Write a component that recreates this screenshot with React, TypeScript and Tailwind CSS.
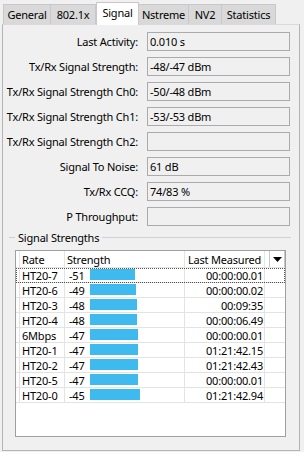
import React from "react";

const fields: [string, string][] = [
  ["Last Activity:", "0.010 s"],
  ["Tx/Rx Signal Strength:", "-48/-47 dBm"],
  ["Tx/Rx Signal Strength Ch0:", "-50/-48 dBm"],
  ["Tx/Rx Signal Strength Ch1:", "-53/-53 dBm"],
  ["Tx/Rx Signal Strength Ch2:", ""],
  ["Signal To Noise:", "61 dB"],
  ["Tx/Rx CCQ:", "74/83 %"],
  ["P Throughput:", ""],
];

const rows: [string, string, number, string][] = [
  ["HT20-7", "-51", 45, "00:00:00.01"],
  ["HT20-6", "-49", 46, "00:00:00.02"],
  ["HT20-3", "-48", 47, "00:09:35"],
  ["HT20-4", "-48", 47, "00:00:06.49"],
  ["6Mbps", "-47", 48, "00:00:00.01"],
  ["HT20-1", "-47", 48, "01:21:42.15"],
  ["HT20-2", "-47", 48, "01:21:42.43"],
  ["HT20-5", "-47", 48, "00:00:00.01"],
  ["HT20-0", "-45", 50, "01:21:42.94"],
];

const tabs: [string, number][] = [
  ["General", 48],
  ["802.1x", 45],
  ["Signal", 43],
  ["Nstreme", 50],
  ["NV2", 33],
  ["Statistics", 54],
];

export default function App() {
  return (
    <div
      className="w-[304px] h-[452px] bg-[#f0f0f0] text-black text-[11px] tracking-[-0.2px] leading-none overflow-hidden"
      style={{ fontFamily: '"Noto Sans", "DejaVu Sans", sans-serif' }}
    >
      {/* tabs */}
      <div className="flex items-end h-[24px] pl-[3px]">
        {tabs.map(([t, w], i) =>
          t === "Signal" ? (
            <div
              key={t}
              className="relative z-10 h-[23px] -mb-px bg-white border border-b-0 border-[#c8c8c8] flex items-center justify-center pb-[3px]"
              style={{ width: w }}
            >
              {t}
            </div>
          ) : (
            <div
              key={t}
              className={`h-[20px] bg-[#d9d9d9] border-t border-r border-[#c8c8c8] flex items-center justify-center ${
                i === 0 ? "border-l" : ""
              }`}
              style={{ width: w }}
            >
              {t}
            </div>
          )
        )}
      </div>

      {/* panel */}
      <div className="ml-[2px] w-[298px] h-[427px] border border-[#b4b4b4] border-t-[#d9d9d9] bg-[#f0f0f0] pt-[7px]">
        <div className="flex flex-col gap-[6px]">
          {fields.map(([l, v]) => (
            <div key={l} className="flex items-center h-[19px]">
              <div className="w-[136px] text-right pr-[1px]">{l}</div>
              <div className="ml-[8px] w-[143px] h-[19px] border border-[#ababab] bg-[#f0f0f0] flex items-center pl-[2px]">
                {v}
              </div>
            </div>
          ))}
        </div>

        {/* group header */}
        <div className="mt-[4px] h-[14px] flex items-center pl-[6px] w-[288px]">
          <div className="w-[6px] h-px bg-[#d0d0d0]" />
          <div className="px-[3px]">Signal Strengths</div>
          <div className="flex-1 h-px bg-[#d0d0d0]" />
        </div>

        {/* list */}
        <div className="mt-[6px] ml-[12px] w-[271px] h-[187px] border border-[#a0a0a0] bg-white">
          {/* header */}
          <div className="flex h-[17px] border-b border-[#e5e5e5]">
            <div className="w-[4px] border-r border-[#e5e5e5]" />
            <div className="w-[45px] border-r border-[#e5e5e5] pl-[2px] flex items-center">Rate</div>
            <div className="w-[120px] border-r border-[#e5e5e5] pl-[2px] flex items-center">Strength</div>
            <div className="w-[80px] border-r border-[#e5e5e5] pl-[3px] flex items-center">Last Measured</div>
            <div className="w-[5px] border-r border-[#c8c8c8]" />
            <div className="w-[15px] border-r border-[#c8c8c8] flex items-center justify-center">
              <svg width="9" height="5" viewBox="0 0 9 5">
                <path d="M0 0H9L4.5 5Z" fill="#000" />
              </svg>
            </div>
          </div>
          {rows.map(([r, s, w, t], i) => (
            <div
              key={r}
              className={`flex h-[15px] border-b border-[#e3e3e3] ${
                i === 0 ? "outline-1 outline-dotted outline-[#555] -outline-offset-1" : ""
              }`}
            >
              <div className="w-[4px] border-r border-[#e3e3e3]" />
              <div className="w-[45px] border-r border-[#e3e3e3] pl-[2px] flex items-center">{r}</div>
              <div className="w-[120px] border-r border-[#e3e3e3] pl-[4px] flex items-start">
                <span className="w-[21px] h-[14px] flex items-center">{s}</span>
                <div className="mt-px h-[11px] bg-[#3fbaef]" style={{ width: w }} />
              </div>
              <div className="w-[80px] border-r border-[#e3e3e3] pr-[1px] flex items-center justify-end">{t}</div>
              <div className="flex-1" />
            </div>
          ))}
        </div>
      </div>
    </div>
  );
}
